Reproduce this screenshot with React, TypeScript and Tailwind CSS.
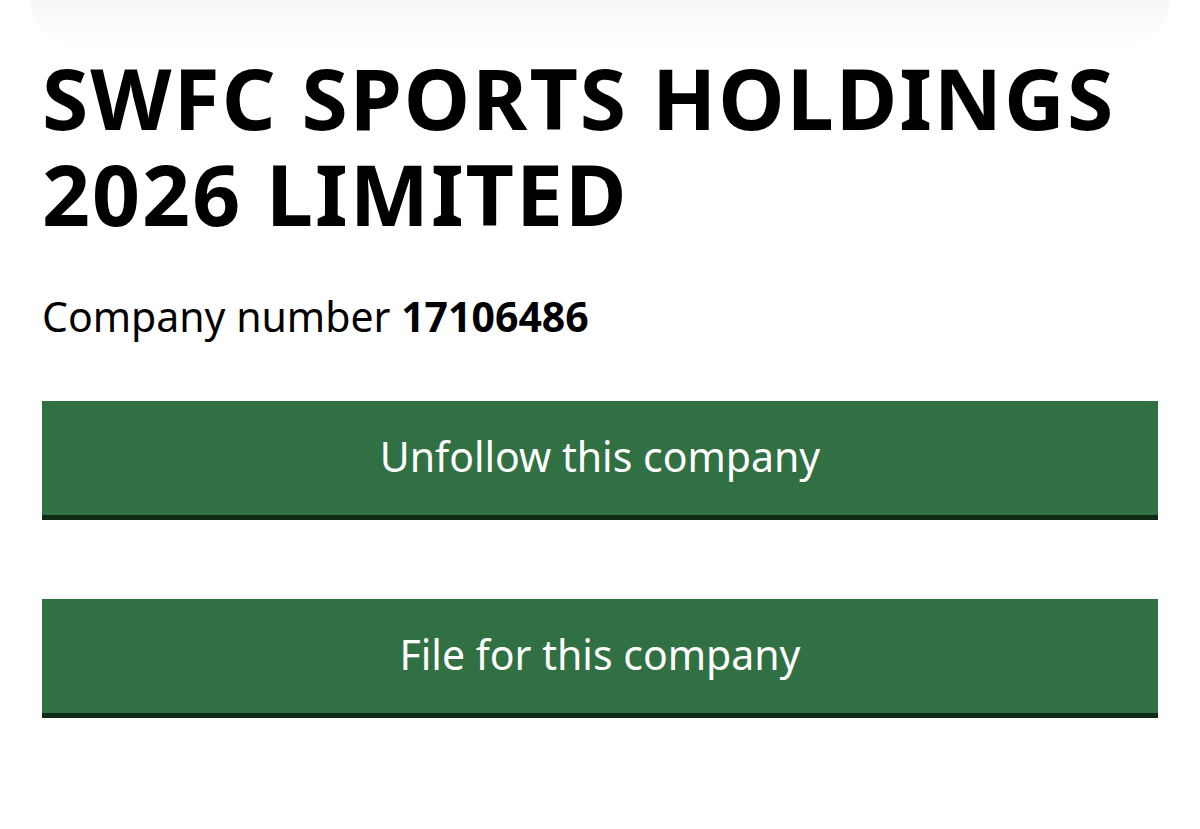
import React from 'react';

const font = { fontFamily: '"Noto Sans", "Liberation Sans", sans-serif' };

const GreenButton: React.FC<{ label: string }> = ({ label }) => (
  <button
    className="w-full h-[114px] bg-[#317042] text-white text-[41px] leading-none shadow-[0_5px_0_#0d2a17] mb-[5px] flex items-center justify-center pb-[4px]"
  >
    {label}
  </button>
);

const App: React.FC = () => {
  return (
    <div className="w-[1200px] h-[829px] bg-white text-black overflow-hidden" style={font}>
      <div className="mx-[30px] h-[44px] rounded-b-[80px] bg-gradient-to-b from-[#f7f7f7] to-[#fefefe]" />
      <div className="px-[42px]">
        <h1 className="text-[84px] font-bold leading-[96px] tracking-[2px] mt-[6px]">
          SWFC SPORTS HOLDINGS 2026 LIMITED
        </h1>
        <p className="text-[41px] leading-[48px] mt-[50px]">
          Company number <span className="font-bold">17106486</span>
        </p>
        <div className="mt-[61px] flex flex-col gap-[79px]">
          <GreenButton label="Unfollow this company" />
          <GreenButton label="File for this company" />
        </div>
      </div>
    </div>
  );
};

export default App;
